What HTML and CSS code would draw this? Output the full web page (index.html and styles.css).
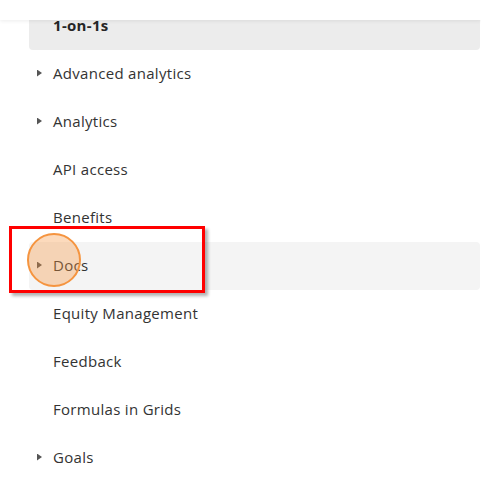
FILE: index.html
```html
<!DOCTYPE html>
<html lang="en">

<head>
  <meta charset="UTF-8" />
  <meta name="viewport" content="width=device-width, initial-scale=1.0" />
  <title>Sidebar</title>
  <link rel="stylesheet" href="styles.css">
</head>

<body>
  <div class="topbar"></div>

  <ul class="nav">
    <li class="nav-item selected"><span class="caret-slot"></span>1-on-1s</li>
    <li class="nav-item"><span class="caret-slot"><span class="caret"></span></span>Advanced analytics</li>
    <li class="nav-item"><span class="caret-slot"><span class="caret"></span></span>Analytics</li>
    <li class="nav-item"><span class="caret-slot"></span>API access</li>
    <li class="nav-item"><span class="caret-slot"></span>Benefits</li>
    <li class="nav-item hover"><span class="caret-slot"><span class="caret"></span></span>Docs</li>
    <li class="nav-item"><span class="caret-slot"></span>Equity Management</li>
    <li class="nav-item"><span class="caret-slot"></span>Feedback</li>
    <li class="nav-item"><span class="caret-slot"></span>Formulas in Grids</li>
    <li class="nav-item"><span class="caret-slot"><span class="caret"></span></span>Goals</li>
  </ul>

  <!-- annotation over the Docs row -->
  <div class="highlight-box"></div>
  <div class="click-dot"></div>
</body>

</html>
```

FILE: styles.css
```css
body {
  margin: 0;
  font-family: 'Open Sans', Arial, sans-serif;
  background-color: #fff;
  color: #333;
  overflow: hidden;
}

.topbar {
  position: fixed;
  top: 0;
  left: 0;
  right: 0;
  height: 20px;
  background-color: #fff;
  box-shadow: 0 1px 4px rgba(0, 0, 0, 0.08);
  z-index: 2;
}

.nav {
  list-style: none;
  margin: 2px 1px 0 29px;
  padding: 0;
}

.nav-item {
  display: flex;
  align-items: center;
  box-sizing: border-box;
  height: 48px;
  padding: 0 0 2px 8px;
  border-radius: 4px;
  font-size: 15px;
  font-weight: 500;
  letter-spacing: 0.3px;
}

.nav-item.selected {
  background-color: #ececec;
  font-weight: bold;
  color: #262626;
}

.nav-item.hover {
  background-color: #f4f4f4;
}

.caret-slot {
  display: flex;
  align-items: center;
  width: 16px;
  flex-shrink: 0;
}

.caret {
  width: 5px;
  height: 7px;
  background-color: #555;
  clip-path: polygon(0 0, 100% 50%, 0 100%);
}

.highlight-box {
  position: absolute;
  left: 9px;
  top: 226px;
  width: 190px;
  height: 61px;
  border: 3px solid #f00;
  box-shadow: 3px 3px 3px rgba(0, 0, 0, 0.3);
  z-index: 3;
}

.click-dot {
  position: absolute;
  left: 27px;
  top: 233px;
  width: 50px;
  height: 50px;
  border: 2px solid #f5943f;
  border-radius: 50%;
  background-color: rgba(245, 148, 63, 0.35);
  z-index: 4;
}
```
